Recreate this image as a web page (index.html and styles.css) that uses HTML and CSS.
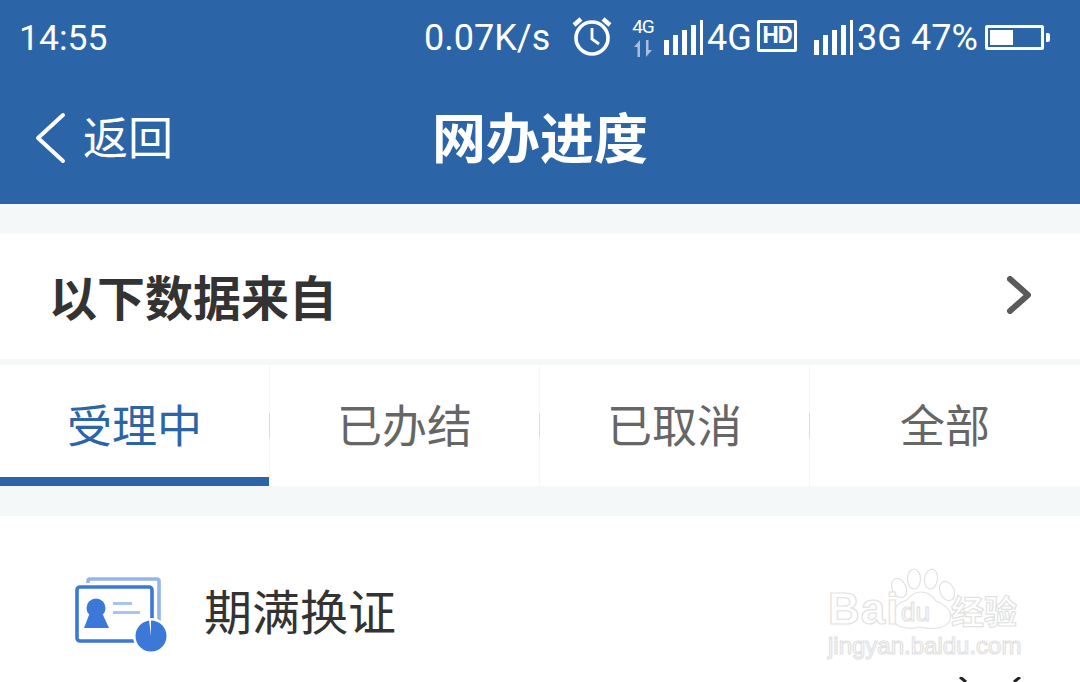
FILE: index.html
```html
<!DOCTYPE html>
<html lang="zh-CN">
<head>
  <meta charset="UTF-8">
  <title>网办进度</title>
  <link rel="stylesheet" href="styles.css">
</head>
<body>
  <div class="header">
    <div class="status">
      <span class="time">14:55</span>
      <span class="speed">0.07K/s</span>
      <svg class="alarm" width="40" height="40" viewBox="0 0 40 40" fill="none" stroke="#fff">
        <circle cx="20" cy="22" r="16" stroke-width="3.6"/>
        <path d="M20 12v11l7 5" stroke-width="2.8"/>
        <path d="M2 9l7-6M38 9l-7-6" stroke-width="4.4"/>
      </svg>
      <div class="net">
        <span class="net-label">4G</span>
        <svg width="20" height="17" viewBox="0 0 20 17" fill="#a9c0dc"><path d="M1 7l6-7v17H4.500V7zM19 10l-6 7V0h2.500v10z"/></svg>
      </div>
      <svg class="signal" width="39" height="35" viewBox="0 0 39 35" fill="#fff">
        <rect x="0" y="20" width="5" height="15"/><rect x="9" y="15" width="5" height="20"/><rect x="18" y="10" width="5" height="25"/><rect x="27" y="5" width="5" height="30"/><rect x="36" y="0" width="3" height="35"/>
      </svg>
      <span class="net-big">4G</span>
      <span class="hd">HD</span>
      <svg class="signal signal-2" width="39" height="35" viewBox="0 0 39 35" fill="#fff">
        <rect x="0" y="20" width="5" height="15"/><rect x="9" y="15" width="5" height="20"/><rect x="18" y="10" width="5" height="25"/><rect x="27" y="5" width="5" height="30"/><rect x="36" y="0" width="3" height="35"/>
      </svg>
      <span class="net-big">3G</span>
      <span class="pct">47%</span>
      <div class="battery"><div class="battery-fill" style="width:46%"></div></div>
      <div class="battery-tip"></div>
    </div>
    <div class="nav">
      <a class="back">
        <svg width="32" height="52" viewBox="0 0 32 52" fill="none" stroke="#fff" stroke-width="4" stroke-linecap="round" stroke-linejoin="round"><path d="M28 3L3 26l25 23"/></svg>
        <span>返回</span>
      </a>
      <h1>网办进度</h1>
    </div>
  </div>

  <div class="source">
    <span>以下数据来自</span>
    <svg class="more" width="28" height="42" viewBox="0 0 28 42" fill="none" stroke="#5a5a5a" stroke-width="6" stroke-linecap="round" stroke-linejoin="round"><path d="M5 5l18 16L5 37"/></svg>
  </div>

  <div class="tabs">
    <div class="tab active">受理中</div>
    <div class="tab">已办结</div>
    <div class="tab">已取消</div>
    <div class="tab">全部</div>
  </div>

  <div class="card">
    <svg class="card-icon" width="93" height="76" viewBox="0 0 93 76">
      <path d="M13 6V4q0-2 2-2h67q2 0 2 2v54" fill="none" stroke="#93b5ea" stroke-width="3.6"/>
      <rect x="2" y="10" width="75" height="54" rx="3" fill="#fff" stroke="#3b78d8" stroke-width="3.6"/>
      <circle cx="21" cy="31" r="9.500" fill="#3b78d8"/>
      <path d="M14 38h14l6 13H9z" fill="#3b78d8"/>
      <rect x="38" y="25" width="19" height="3" fill="#a9c5ef"/>
      <rect x="38" y="34" width="27" height="3" fill="#a9c5ef"/>
      <circle cx="76" cy="59" r="18" fill="#fff"/>
      <circle cx="76" cy="59" r="15.500" fill="#3b78d8"/>
      <path d="M74 43h2v16z" fill="#fff"/>
    </svg>
    <span class="card-title">期满换证</span>

    <svg class="watermark" width="200" height="100" viewBox="0 0 200 100">
      <g fill="#fff" stroke="#e2e2e2" stroke-width="1.2">
        <ellipse cx="72" cy="24" rx="7" ry="10" transform="rotate(-25 72 24)"/>
        <ellipse cx="87" cy="15" rx="6.500" ry="10"/>
        <ellipse cx="104" cy="15" rx="6.500" ry="10" transform="rotate(8 104 15)"/>
        <ellipse cx="120" cy="27" rx="7" ry="10" transform="rotate(-25 120 27)"/>
        <path d="M72 62q-8-4-6-14q3-9 14-12q6-8 14-8q9 0 15 9q9 3 14 11q3 11-8 15q-10 3-22 0q-11 3-21-1z"/>
        <text class="wm-big" x="1" y="60">Bai</text>
        <text class="wm-du" x="74" y="57">du</text>
        <text class="wm-cn" x="124" y="60">经验</text>
        <text class="wm-url" x="1" y="90">jingyan.baidu.com</text>
      </g>
    </svg>

    <svg class="peek" width="62" height="5" viewBox="0 0 62 5" fill="none" stroke="#222" stroke-width="3"><path d="M1 0l6 5M61 0l-6 5"/></svg>
  </div>
</body>
</html>
```

FILE: styles.css
```css
* { box-sizing: border-box; }
html, body { margin: 0; height: 682px; overflow: hidden; }
body { font-family: "Noto Sans CJK SC", sans-serif; background: #f4f8f9; color: #333; }

.header { height: 204px; background: #2b65a8; color: #fff; }

.status { height: 76px; display: flex; align-items: center; padding-left: 19px; font-family: Roboto, sans-serif; font-size: 36px; }
.time { width: 405px; font-size: 35.5px; }
.speed { width: 148px; font-size: 36px; }
.alarm { margin-top: -4px; }
.net { width: 26px; margin-left: 18px; display: flex; flex-direction: column; align-items: center; gap: 3px; margin-top: -2px; }
.net-label { font-size: 19px; line-height: 20px; letter-spacing: -1px; }
.signal { margin-left: 8px; margin-top: -1px; }
.signal-2 { margin-left: 17px; }
.net-big { margin-left: 4px; width: 48px; }
.hd { margin-left: 2px; width: 40px; height: 32px; border: 3px solid #fff; border-radius: 2px; font-size: 23px; font-weight: 700; line-height: 25px; text-align: center; letter-spacing: -1px; margin-top: -4px; }
.pct { margin-left: 6px; width: 74px; }
.battery { width: 59px; height: 25px; border: 3px solid #fff; border-radius: 2px; padding: 2px; margin-top: -2px; }
.battery-fill { height: 100%; background: #fff; }
.battery-tip { width: 4px; height: 9px; margin-left: 2px; background: #fff; border-radius: 0 2px 2px 0; margin-top: -2px; }

.nav { height: 128px; display: grid; grid-template-columns: 1fr auto 1fr; align-items: center; padding-bottom: 8px; }
.back { display: flex; align-items: center; gap: 16px; padding-left: 35px; font-size: 45px; line-height: 52px; }
.back svg { margin-top: 4px; }
.nav h1 { margin: 0; font-size: 54px; font-weight: 700; line-height: 64px; }

.source { height: 125px; margin-top: 30px; padding: 0 47px 4px 49px; display: flex; align-items: center; justify-content: space-between; background: #fff; font-size: 48px; font-weight: 700; }
.more { filter: blur(.6px); }

.tabs { height: 121px; margin-top: 6px; display: flex; background: #fff; }
.tab { width: 270px; position: relative; text-align: center; font-size: 45px; line-height: 117px; color: #666; border-right: 1px solid #f4f6f7; }
.tab::after { content: ""; position: absolute; right: -1px; top: 48px; width: 1px; height: 25px; background: #dcdcdc; }
.tab:last-child { border-right: 0; }
.tab:last-child::after { display: none; }
.tab.active { color: #2b65a8; box-shadow: inset 0 -9px 0 #2b65a8; }

.card { height: 166px; margin-top: 30px; position: relative; background: #fff; display: flex; align-items: flex-start; padding: 61px 0 0 75px; }
.card-icon { flex: none; }
.card-title { margin-left: 36px; margin-top: 1px; font-size: 48px; line-height: 62px; color: #333; }

.watermark { position: absolute; left: 827px; top: 48px; overflow: visible; font-family: "Liberation Sans", sans-serif; }
.wm-big { font-size: 44px; font-weight: 700; letter-spacing: 1px; }
.wm-du { font-size: 26px; }
.wm-cn { font-family: "Noto Sans CJK SC", sans-serif; font-size: 33px; font-weight: 700; }
.wm-url { font-size: 24px; }
.peek { position: absolute; left: 959px; top: 161px; }
```
